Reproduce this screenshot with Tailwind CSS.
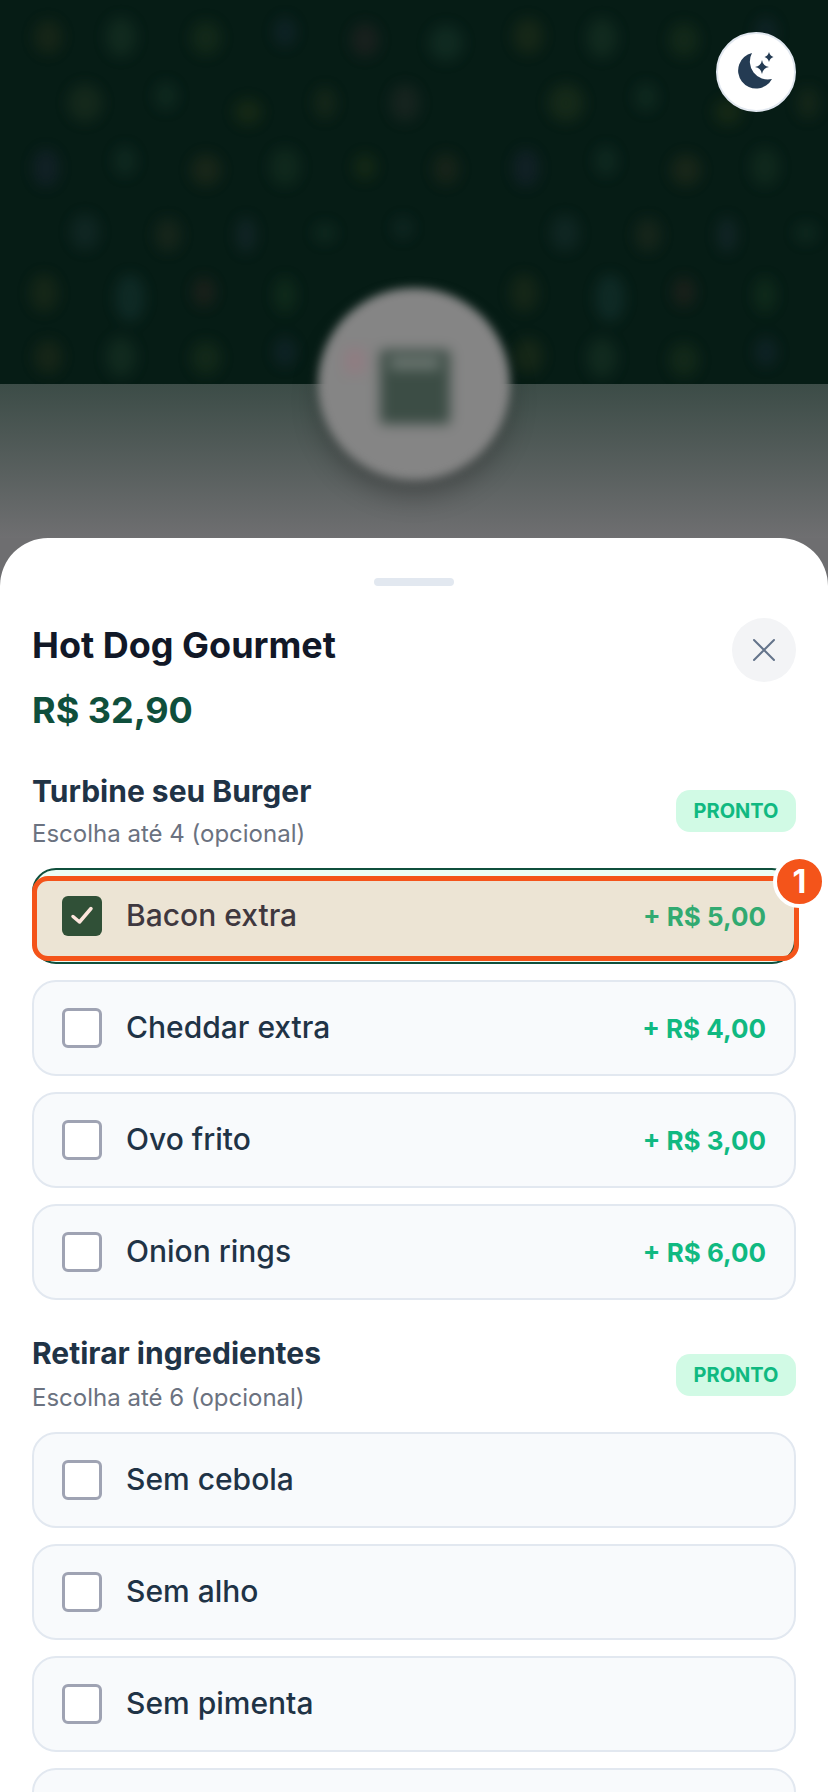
<!DOCTYPE html>
<html lang="pt-BR">
<head>
    <meta charset="UTF-8">
    <meta name="viewport" content="width=device-width, initial-scale=1.0">
    <title>Hot Dog Gourmet</title>
    <script src="https://cdn.jsdelivr.net/npm/@tailwindcss/browser@4"></script>
</head>
<body class="bg-white">
<div class="relative w-[828px] h-[1792px] overflow-hidden font-['Inter',sans-serif] bg-[#6e6e70]">

    <!-- blurred page behind the sheet -->
    <div class="absolute inset-x-0 top-0 h-[538px] overflow-hidden">
        <div class="h-[384px] bg-[#061c15]"></div>
        <div class="h-[154px] bg-gradient-to-b from-[#3c4c47] to-[#6f6f71]"></div>
        <svg class="absolute left-0 top-0" width="828" height="384" viewBox="0 0 828 384">
            <defs><filter id="soft" x="-80%" y="-80%" width="260%" height="260%"><feGaussianBlur stdDeviation="7"/></filter></defs>
            <g filter="url(#soft)" opacity="0.3">
                <ellipse cx="48" cy="37" rx="14" ry="17" fill="#3a3a1c"/><ellipse cx="121" cy="37" rx="15" ry="20" fill="#2c4a34"/><ellipse cx="206" cy="38" rx="15" ry="17" fill="#2f4420"/><ellipse cx="285" cy="32" rx="11" ry="15" fill="#22304a"/><ellipse cx="365" cy="40" rx="14" ry="17" fill="#442a30"/><ellipse cx="446" cy="43" rx="17" ry="18" fill="#28483a"/><ellipse cx="528" cy="36" rx="15" ry="18" fill="#3a401c"/><ellipse cx="602" cy="38" rx="15" ry="20" fill="#2c4a34"/><ellipse cx="684" cy="40" rx="15" ry="17" fill="#2f4420"/><ellipse cx="766" cy="32" rx="11" ry="15" fill="#22304a"/>
                <ellipse cx="85" cy="103" rx="17" ry="19" fill="#36442a"/><ellipse cx="166" cy="96" rx="11" ry="14" fill="#204436"/><ellipse cx="248" cy="112" rx="14" ry="13" fill="#384416"/><ellipse cx="325" cy="103" rx="11" ry="16" fill="#343e20"/><ellipse cx="405" cy="103" rx="15" ry="19" fill="#3a3434"/><ellipse cx="566" cy="103" rx="18" ry="19" fill="#384624"/><ellipse cx="646" cy="97" rx="11" ry="14" fill="#204436"/><ellipse cx="728" cy="112" rx="14" ry="13" fill="#384416"/><ellipse cx="808" cy="103" rx="11" ry="16" fill="#343e20"/>
                <ellipse cx="46" cy="168" rx="13" ry="19" fill="#2c2a4c"/><ellipse cx="125" cy="161" rx="11" ry="15" fill="#224438"/><ellipse cx="206" cy="170" rx="15" ry="16" fill="#423c20"/><ellipse cx="285" cy="167" rx="15" ry="19" fill="#28442e"/><ellipse cx="365" cy="167" rx="11" ry="13" fill="#344418"/><ellipse cx="446" cy="169" rx="13" ry="16" fill="#3e3620"/><ellipse cx="526" cy="168" rx="13" ry="19" fill="#2c2a4c"/><ellipse cx="606" cy="161" rx="11" ry="15" fill="#224438"/><ellipse cx="686" cy="170" rx="15" ry="16" fill="#423c20"/><ellipse cx="765" cy="167" rx="14" ry="19" fill="#28442e"/>
                <ellipse cx="85" cy="232" rx="14" ry="18" fill="#263c42"/><ellipse cx="168" cy="235" rx="13" ry="17" fill="#3a3a26"/><ellipse cx="246" cy="235" rx="10" ry="18" fill="#2c384a"/><ellipse cx="325" cy="233" rx="11" ry="10" fill="#204436"/><ellipse cx="403" cy="228" rx="10" ry="11" fill="#203a3a"/><ellipse cx="565" cy="233" rx="14" ry="18" fill="#263c42"/><ellipse cx="648" cy="235" rx="13" ry="17" fill="#3a3a26"/><ellipse cx="727" cy="235" rx="10" ry="18" fill="#2c384a"/><ellipse cx="806" cy="233" rx="11" ry="10" fill="#204436"/>
                <ellipse cx="44" cy="293" rx="14" ry="19" fill="#383c1c"/><ellipse cx="130" cy="298" rx="15" ry="24" fill="#204a48"/><ellipse cx="204" cy="292" rx="11" ry="15" fill="#4a2a26"/><ellipse cx="285" cy="295" rx="11" ry="18" fill="#204a28"/><ellipse cx="524" cy="293" rx="14" ry="19" fill="#383c1c"/><ellipse cx="610" cy="298" rx="15" ry="24" fill="#204a48"/><ellipse cx="684" cy="292" rx="11" ry="15" fill="#4a2a26"/><ellipse cx="765" cy="295" rx="11" ry="18" fill="#204a28"/>
                <ellipse cx="48" cy="357" rx="14" ry="17" fill="#3a3a1c"/><ellipse cx="121" cy="357" rx="15" ry="20" fill="#2c4a34"/><ellipse cx="206" cy="358" rx="15" ry="17" fill="#2f4420"/><ellipse cx="285" cy="352" rx="11" ry="15" fill="#22304a"/><ellipse cx="528" cy="356" rx="15" ry="18" fill="#3a401c"/><ellipse cx="602" cy="358" rx="15" ry="20" fill="#2c4a34"/><ellipse cx="684" cy="360" rx="15" ry="17" fill="#2f4420"/><ellipse cx="766" cy="352" rx="11" ry="15" fill="#22304a"/>
            </g>
        </svg>
        <!-- blurred logo -->
        <div class="absolute left-[318px] top-[288px] w-[192px] h-[192px] rounded-full bg-[#858585] blur-[5px] shadow-[0_16px_24px_rgba(0,0,0,0.25)]">
            <div class="absolute left-[62px] top-[62px] w-[70px] h-[74px] rounded-[4px] bg-[#3c4d45] blur-[4px]"></div>
            <div class="absolute left-[72px] top-[68px] w-[50px] h-[14px] bg-[#69746f] blur-[4px]"></div>
            <div class="absolute left-[26px] top-[60px] w-[22px] h-[26px] bg-[#8f7d82] blur-[5px]"></div>
        </div>
    </div>

    <!-- dark mode toggle -->
    <button class="absolute left-[716px] top-[32px] w-[80px] h-[80px] rounded-full bg-white border-2 border-[#e2e8f0]">
        <svg class="absolute -left-[2px] -top-[2px]" width="80" height="80" viewBox="0 0 80 80" fill="#243b53">
            <path d="M36 21A18 18 0 1 0 56 47A18 18 0 0 1 36 21Z"/>
            <path d="M46 28Q47 34 53 35Q47 36 46 42Q45 36 39 35Q45 34 46 28Z"/>
            <path d="M53 20Q54 24 57.500 25Q54 26 53 30Q52 26 48.500 25Q52 24 53 20Z"/>
        </svg>
    </button>

    <!-- bottom sheet -->
    <div class="relative mt-[538px] h-[1254px] bg-white rounded-t-[48px] px-[32px] pt-[40px]">
        <div class="mx-auto w-[80px] h-[8px] rounded-full bg-[#e2e8f0]"></div>

        <div class="mt-[32px] flex justify-between items-start h-[64px]">
            <h1 class="text-[36px] leading-[54px] font-bold text-[#111827]">Hot Dog Gourmet</h1>
            <button class="w-[64px] h-[64px] rounded-full bg-[#f3f4f6] flex items-center justify-center">
                <svg width="24" height="24" viewBox="0 0 24 24" fill="none" stroke="#64748b" stroke-width="2" stroke-linecap="round"><path d="M2 2L22 22M22 2L2 22"/></svg>
            </button>
        </div>
        <p class="mt-[5px] h-[46px] text-[36px] leading-[46px] font-bold text-[#0f4f3c]">R$ 32,90</p>

        <!-- Turbine seu Burger -->
        <div class="mt-[37px] h-[82px] flex justify-between items-center">
            <div class="pt-[2px]">
                <h2 class="text-[30px] leading-[42px] font-bold text-[#1f3346]">Turbine seu Burger</h2>
                <p class="mt-[2px] text-[24px] leading-[40px] text-[#6b7280]">Escolha até 4 (opcional)</p>
            </div>
            <span class="w-[120px] h-[42px] rounded-[14px] bg-[#d1fae5] text-[#10b981] text-[20px] font-bold flex items-center justify-center">PRONTO</span>
        </div>

        <div class="mt-[16px] flex flex-col gap-[16px]">
            <label class="relative h-[96px] rounded-[24px] border-2 border-[#0f4f3c] bg-[#ecfdf5] flex items-center gap-[24px] px-[28px]">
                <span class="w-[40px] h-[40px] rounded-[6px] bg-[#0f4f3c] flex items-center justify-center">
                    <svg width="40" height="40" viewBox="0 0 40 40" fill="none" stroke="#fff" stroke-width="3.500" stroke-linecap="round" stroke-linejoin="round"><path d="M11 20.500L17.500 26L29 12.500"/></svg>
                </span>
                <span class="flex-1 pb-[2px] text-[30px] font-medium text-[#1f3346]">Bacon extra</span>
                <span class="text-[26px] font-bold text-[#10b981]">+ R$ 5,00</span>
                <!-- annotation highlight -->
                <div class="absolute -left-[2px] top-[6px] w-[767px] h-[85px] rounded-[16px] border-[5px] border-[#f4541a] bg-[#f4541a]/15"></div>
                <div class="absolute left-[739px] -top-[15px] w-[53px] h-[53px] rounded-full border-4 border-white bg-[#f4541a] text-white text-[32px] font-bold flex items-center justify-center">1</div>
            </label>
            <label class="h-[96px] rounded-[24px] border-2 border-[#e2e8f0] bg-[#f8fafc] flex items-center gap-[24px] px-[28px]">
                <span class="w-[40px] h-[40px] rounded-[6px] border-[3px] border-[#9fa3b3] bg-white"></span>
                <span class="flex-1 pb-[2px] text-[30px] font-medium text-[#1f3346]">Cheddar extra</span>
                <span class="text-[26px] font-bold text-[#10b981]">+ R$ 4,00</span>
            </label>
            <label class="h-[96px] rounded-[24px] border-2 border-[#e2e8f0] bg-[#f8fafc] flex items-center gap-[24px] px-[28px]">
                <span class="w-[40px] h-[40px] rounded-[6px] border-[3px] border-[#9fa3b3] bg-white"></span>
                <span class="flex-1 pb-[2px] text-[30px] font-medium text-[#1f3346]">Ovo frito</span>
                <span class="text-[26px] font-bold text-[#10b981]">+ R$ 3,00</span>
            </label>
            <label class="h-[96px] rounded-[24px] border-2 border-[#e2e8f0] bg-[#f8fafc] flex items-center gap-[24px] px-[28px]">
                <span class="w-[40px] h-[40px] rounded-[6px] border-[3px] border-[#9fa3b3] bg-white"></span>
                <span class="flex-1 pb-[2px] text-[30px] font-medium text-[#1f3346]">Onion rings</span>
                <span class="text-[26px] font-bold text-[#10b981]">+ R$ 6,00</span>
            </label>
        </div>

        <!-- Retirar ingredientes -->
        <div class="mt-[34px] h-[82px] flex justify-between items-center">
            <div>
                <h2 class="-mt-[1px] text-[30px] leading-[42px] font-bold text-[#1f3346]">Retirar ingredientes</h2>
                <p class="mt-[4px] text-[24px] leading-[40px] text-[#6b7280]">Escolha até 6 (opcional)</p>
            </div>
            <span class="w-[120px] h-[42px] rounded-[14px] bg-[#d1fae5] text-[#10b981] text-[20px] font-bold flex items-center justify-center">PRONTO</span>
        </div>

        <div class="mt-[16px] flex flex-col gap-[16px]">
            <label class="h-[96px] shrink-0 rounded-[24px] border-2 border-[#e2e8f0] bg-[#f8fafc] flex items-center gap-[24px] px-[28px]">
                <span class="w-[40px] h-[40px] rounded-[6px] border-[3px] border-[#9fa3b3] bg-white"></span>
                <span class="pb-[2px] text-[30px] font-medium text-[#1f3346]">Sem cebola</span>
            </label>
            <label class="h-[96px] shrink-0 rounded-[24px] border-2 border-[#e2e8f0] bg-[#f8fafc] flex items-center gap-[24px] px-[28px]">
                <span class="w-[40px] h-[40px] rounded-[6px] border-[3px] border-[#9fa3b3] bg-white"></span>
                <span class="pb-[2px] text-[30px] font-medium text-[#1f3346]">Sem alho</span>
            </label>
            <label class="h-[96px] shrink-0 rounded-[24px] border-2 border-[#e2e8f0] bg-[#f8fafc] flex items-center gap-[24px] px-[28px]">
                <span class="w-[40px] h-[40px] rounded-[6px] border-[3px] border-[#9fa3b3] bg-white"></span>
                <span class="pb-[2px] text-[30px] font-medium text-[#1f3346]">Sem pimenta</span>
            </label>
            <div class="h-[96px] shrink-0 rounded-[24px] border-2 border-[#e2e8f0] bg-[#f8fafc]"></div>
        </div>
    </div>
</div>
</body>
</html>
